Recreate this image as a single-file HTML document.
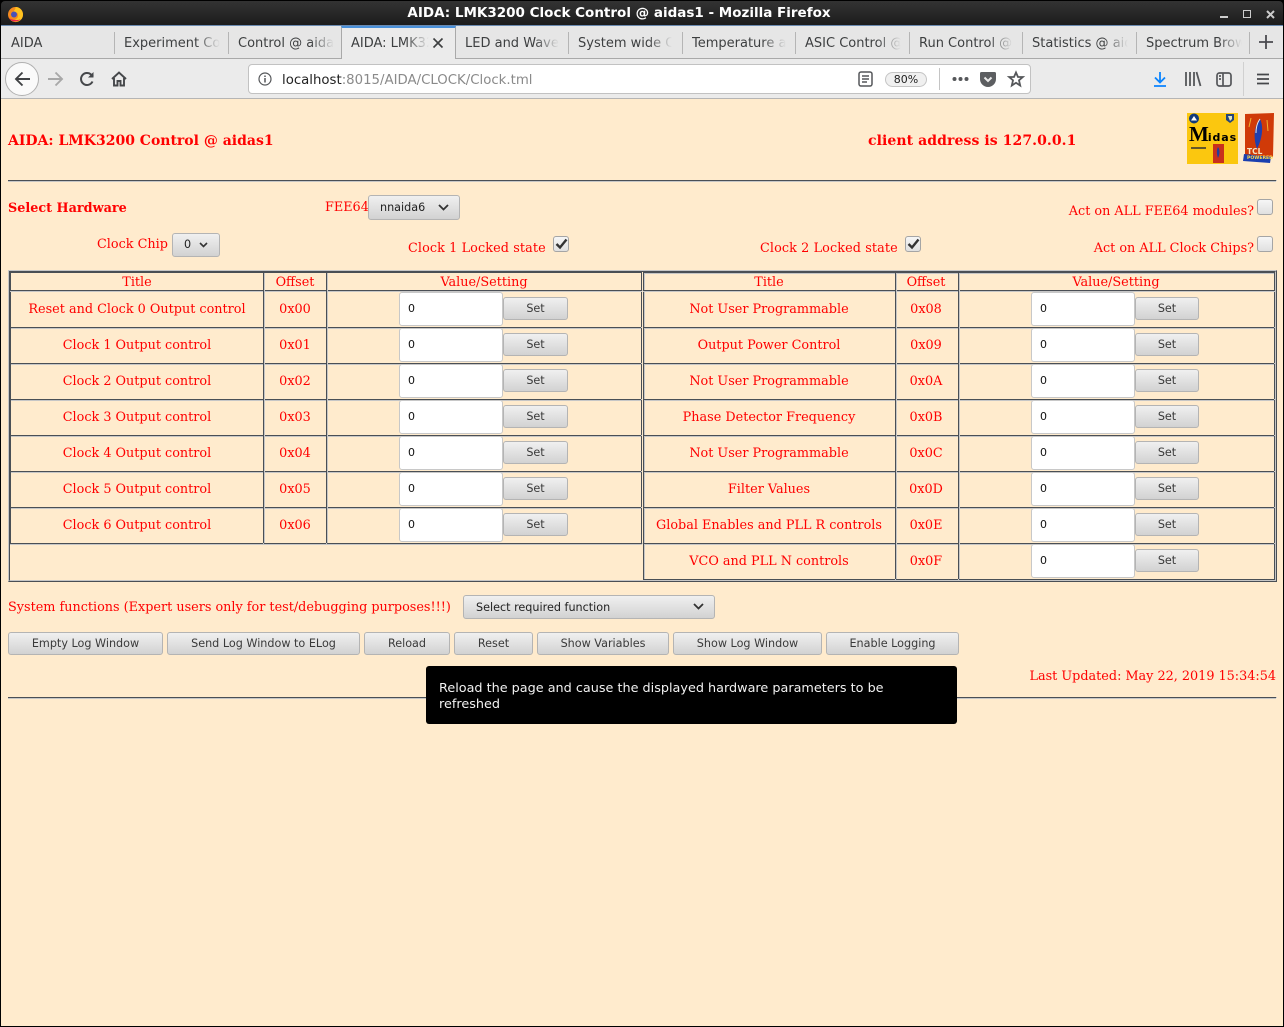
<!DOCTYPE html>
<html><head><meta charset="utf-8"><title>AIDA: LMK3200 Clock Control @ aidas1</title>
<style>
*{box-sizing:border-box}
html,body{margin:0;padding:0;width:1284px;height:1027px;overflow:hidden;background:#000}
body{position:relative;font-family:"DejaVu Sans",sans-serif}
.a{position:absolute;white-space:nowrap}
#titlebar{left:1px;top:1px;width:1236px;height:24px;color:#fff;font-weight:bold;font-size:13.5px;line-height:25px;text-align:center}
#tb{left:1px;top:1px;width:1282px;height:24px;background:linear-gradient(#333,#1c1c1c);border-radius:4px 4px 0 0}
#tabs{left:1px;top:25px;width:1282px;height:34px;background:#e6e6e6;border-top:1px solid #6a8ab0;border-bottom:1px solid #a9a9a9}
#nav{left:1px;top:59px;width:1282px;height:40px;background:#ebebeb;border-bottom:1px solid #b5b5b5}
.tab{position:absolute;top:33px;height:22px;font-size:13px;line-height:22px;color:#3d3f40;overflow:hidden;white-space:nowrap}
.tab i{position:absolute;right:0;top:0;width:24px;height:22px;background:linear-gradient(90deg,rgba(230,230,230,0),#e6e6e6)}
.sep{position:absolute;top:32px;width:1px;height:22px;background:#b5b5b5}
#page{left:1px;top:99px;width:1282px;height:927px;background:#ffebcd}
.s{position:absolute;white-space:nowrap;color:#f00;font-family:"DejaVu Serif",serif;font-size:12.8px;line-height:20px;height:16px}
.b{font-weight:bold}
.c{text-align:center;transform:translateY(1px)}
.l{position:absolute;background:#4a4f55;box-shadow:0 1px 0 #c6c6c6,1px 0 0 #c6c6c6}
.in{position:absolute;width:104px;height:34px;background:#fff;border:1px solid #c8c8c8;border-radius:3px;font-size:11px;line-height:32px;padding-left:8px;color:#111}
.btn{position:absolute;height:23px;background:linear-gradient(#f0f0f0,#d2d2d2);border:1px solid #b4b4b4;border-radius:3px;font-size:11.2px;line-height:21px;text-align:center;color:#3a3a3a;white-space:nowrap}
.cb{position:absolute;width:16px;height:16px;background:linear-gradient(#f6f6f6,#e0e0e0);border:1px solid #a5a5a5;border-radius:3px}
svg{position:absolute;overflow:visible}
</style></head><body>
<div class="a" id="tb"></div>
<div class="a" id="titlebar">AIDA: LMK3200 Clock Control @ aidas1 - Mozilla Firefox</div>
<svg style="left:7px;top:6px" width="17" height="17" viewBox="0 0 17 17"><circle cx="8.5" cy="8.5" r="7.5" fill="#f58a1f"/><path d="M8.5 1A7.5 7.5 0 0 1 16 8.500A7.500 7.500 0 0 1 4 14.500C8 15 12 12 11 8C10 6 8 6 6 6.500C7 4 9 3 8.500 1Z" fill="#ffc21f"/><circle cx="7" cy="8.500" r="3" fill="#4a52b8"/><path d="M2 12C4 16 10 17 14 13C10 15 5 14 2 12Z" fill="#e8214a"/></svg>
<div class="a" style="left:1220px;top:16px;width:8px;height:2px;background:#ccc"></div>
<div class="a" style="left:1243px;top:10px;width:8px;height:8px;border:1.500px solid #ccc"></div>
<svg style="left:1266px;top:10px" width="9" height="9"><path d="M1 1L8 8M8 1L1 8" stroke="#ccc" stroke-width="2"/></svg>

<div class="a" id="tabs"></div>
<div class="a" style="left:341px;top:26px;width:115px;height:33px;background:#ebebeb;border-left:1px solid #a9a9a9;border-right:1px solid #a9a9a9;border-top:2px solid #4a90d9"></div>
<div class="tab" style="left:11px;width:100px">AIDA</div>
<div class="tab" style="left:124px;width:96px">Experiment Control<i></i></div>
<div class="tab" style="left:238px;width:96px">Control @ aidas1<i></i></div>
<div class="tab" style="left:351px;width:78px">AIDA: LMK3200<i style="background:linear-gradient(90deg,rgba(235,235,235,0),#ebebeb)"></i></div>
<svg style="left:432px;top:37px" width="12" height="12"><path d="M1.500 1.500L10.500 10.500M10.500 1.500L1.500 10.500" stroke="#3d3f40" stroke-width="1.600"/></svg>
<div class="tab" style="left:465px;width:94px">LED and Waveform<i></i></div>
<div class="tab" style="left:578px;width:94px">System wide Control<i></i></div>
<div class="tab" style="left:692px;width:94px">Temperature and<i></i></div>
<div class="tab" style="left:805px;width:96px">ASIC Control @ aidas1<i></i></div>
<div class="tab" style="left:919px;width:94px">Run Control @ aidas1<i></i></div>
<div class="tab" style="left:1032px;width:96px">Statistics @ aidas1<i></i></div>
<div class="tab" style="left:1146px;width:96px">Spectrum Browser<i></i></div>
<div class="sep" style="left:114px"></div><div class="sep" style="left:228px"></div><div class="sep" style="left:568px"></div><div class="sep" style="left:682px"></div><div class="sep" style="left:795px"></div><div class="sep" style="left:909px"></div><div class="sep" style="left:1022px"></div><div class="sep" style="left:1136px"></div><div class="sep" style="left:1249px"></div>
<svg style="left:1259px;top:35px" width="14" height="14"><path d="M7 0V14M0 7H14" stroke="#4a4a4f" stroke-width="1.800"/></svg>

<div class="a" id="nav"></div>
<div class="a" style="left:5px;top:62px;width:34px;height:34px;border-radius:50%;background:#fafafa;border:1px solid #b0b0b0"></div>
<svg style="left:14px;top:71px" width="17" height="16" fill="none" stroke="#3f4144" stroke-width="1.900"><path d="M16 8H2M8.500 1.500L2 8L8.500 14.500"/></svg>
<svg style="left:47px;top:71px" width="17" height="16" fill="none" stroke="#a8a8a8" stroke-width="1.900"><path d="M1 8H15M8.500 1.500L15 8L8.500 14.500"/></svg>
<svg style="left:79px;top:71px" width="16" height="16" fill="none" stroke="#45474a" stroke-width="2"><path d="M13.500 10.500A6 6 0 1 1 12 3.500L14 5.500"/><path d="M14.500 1V6.500H9" fill="#45474a" stroke="none"/></svg>
<svg style="left:111px;top:71px" width="16" height="16" fill="none" stroke="#45474a" stroke-width="1.900"><path d="M1 8L8 1.500L15 8M3 7V14.500H6.500V10H9.500V14.500H13V7"/></svg>
<div class="a" style="left:248px;top:64px;width:783px;height:30px;background:#fff;border:1px solid #c2c2c2;border-radius:4px"></div>
<svg style="left:258px;top:72px" width="14" height="14" fill="none" stroke="#55575a" stroke-width="1.200"><circle cx="7" cy="7" r="6"/><path d="M7 6V10.500M7 3.500V5" stroke-width="1.500"/></svg>
<div class="a" style="left:282px;top:72px;font-size:13.300px;line-height:17px;color:#8a8a8a"><span style="color:#222">localhost</span>:8015/AIDA/CLOCK/Clock.tml</div>
<svg style="left:858px;top:71px" width="15" height="16" fill="none" stroke="#55575a" stroke-width="1.500"><rect x="1" y="1" width="13" height="14" rx="2"/><path d="M4 5H11M4 8H11M4 11H9"/></svg>
<div class="a" style="left:885px;top:72px;width:42px;height:15px;border:1px solid #c4c4c4;border-radius:8px;background:#f0f0f0;font-size:11px;line-height:13px;text-align:center;color:#222">80%</div>
<div class="a" style="left:939px;top:68px;width:1px;height:22px;background:#c4c4c4"></div>
<svg style="left:952px;top:76px" width="17" height="6" fill="#55575a"><circle cx="2.500" cy="3" r="2"/><circle cx="8.500" cy="3" r="2"/><circle cx="14.500" cy="3" r="2"/></svg>
<svg style="left:980px;top:72px" width="16" height="15"><path d="M1.500 0H14.500A1.500 1.500 0 0 1 16 1.500V7A8 8 0 0 1 0 7V1.500A1.500 1.500 0 0 1 1.500 0Z" fill="#5c5e61"/><path d="M4.500 5.500L8 9L11.500 5.500" stroke="#ebebeb" stroke-width="2" fill="none"/></svg>
<svg style="left:1008px;top:71px" width="16" height="16" fill="none" stroke="#55575a" stroke-width="1.800"><path d="M8 1.500L10 6H14.800L11 9.300L12.200 14.500L8 11.800L3.800 14.500L5 9.300L1.200 6H6Z"/></svg>
<svg style="left:1153px;top:72px" width="14" height="15" fill="none" stroke="#0a84ff" stroke-width="1.800"><path d="M7 0V10M2 5.500L7 10.500L12 5.500M1 14H13"/></svg>
<svg style="left:1185px;top:72px" width="16" height="15" fill="none" stroke="#55575a" stroke-width="1.800"><path d="M1 0V14M5 0V14M9 0V14M11.500 0L15.500 14"/></svg>
<svg style="left:1216px;top:72px" width="16" height="15" fill="none" stroke="#55575a" stroke-width="1.700"><rect x="1" y="1" width="14" height="13" rx="2.500"/><path d="M7 1V14M3 4H5M3 7H5"/></svg>
<div class="a" style="left:1243px;top:62px;width:1px;height:34px;background:#d0d0d0"></div>
<svg style="left:1257px;top:73px" width="12" height="12" stroke="#45474a" stroke-width="1.700"><path d="M0 1.500H12M0 6H12M0 10.500H12"/></svg>

<div class="a" id="page"></div>

<div class="s b" style="left:8px;top:132px;font-size:14px;line-height:18px">AIDA: LMK3200 Control @ aidas1</div>
<div class="s b" style="left:868px;top:132px;font-size:14px;line-height:18px;letter-spacing:.08px">client address is 127.0.0.1</div>

<div class="a" style="left:1187px;top:113px;width:51px;height:51px;background:#fbc70f"></div>
<div class="a" style="left:1189px;top:122px;font:bold 21px 'Liberation Serif',serif;line-height:24px;color:#000;letter-spacing:-1px">M<span style="font:bold 11px 'DejaVu Sans',sans-serif;letter-spacing:.9px">idas</span></div>
<svg style="left:1187px;top:113px" width="51" height="51"><circle cx="7" cy="5.500" r="5" fill="#123a7a"/><path d="M4 7.500L7 3L10 7.500Z" fill="#fff"/><path d="M39 1H47V7L43 10L39 7Z" fill="#23457c"/><path d="M41 3H45V6L43 8Z" fill="#dfe3c0"/><rect x="26" y="31" width="11" height="19" fill="#c9301c"/><path d="M31 34C29 38 30 42 31 45C33 41 33 37 31 34Z" fill="#1f3fa0"/><rect x="4" y="34" width="15" height="2" fill="#333" opacity=".75"/></svg>
<svg style="left:1243px;top:113px" width="32" height="51"><path d="M2 1L31 0L30 44L2 42Z" fill="#d03a08"/><path d="M1 41L28 44L27 50L0 48Z" fill="#1a3fb0"/><path d="M17 6C11 13 10 25 14 36C19 26 21 14 17 6Z" fill="#1f3fae"/><path d="M17 6C14 10 13 14 13 20" stroke="#e6e6e6" stroke-width="1" fill="none"/><path d="M24 7L25 18" stroke="#f0b030" stroke-width="1"/><path d="M8 5L6 14" stroke="#f0b030" stroke-width="1"/></svg>
<div class="a" style="left:1247px;top:148px;font:bold 7.500px 'DejaVu Sans',sans-serif;color:#f4e6c8;line-height:8px">TCL</div>
<div class="a" style="left:1247px;top:156px;font:bold 4.600px 'DejaVu Sans',sans-serif;color:#ffd84a;line-height:6px">POWERED</div>

<div class="l" style="left:8px;top:180px;width:1268px;height:1px"></div>

<div class="s b" style="left:8px;top:199px">Select Hardware</div>
<div class="s" style="left:325px;top:198px">FEE64</div>
<div class="btn" style="left:368px;top:195px;width:92px;height:25px;line-height:23px;text-align:left;padding-left:11px;color:#222">nnaida6</div>
<svg style="left:438px;top:204px" width="11" height="7" fill="none" stroke="#333" stroke-width="1.800"><path d="M1 1L5.500 5.500L10 1"/></svg>
<div class="s" style="top:202px;text-align:right;width:300px;left:954px">Act on ALL FEE64 modules?</div>
<div class="cb" style="left:1257px;top:199px"></div>
<div class="s" style="left:97px;top:235px">Clock Chip</div>
<div class="btn" style="left:172px;top:233px;width:48px;height:24px;line-height:22px;text-align:left;padding-left:11px;color:#222">0</div>
<svg style="left:199px;top:242px" width="9" height="6" fill="none" stroke="#333" stroke-width="1.600"><path d="M1 1L4.500 4.500L8 1"/></svg>
<div class="s" style="left:408px;top:239px;letter-spacing:.1px">Clock 1 Locked state</div>
<div class="cb" style="left:553px;top:236px"></div>
<svg style="left:555px;top:238px" width="13" height="12" fill="none" stroke="#333" stroke-width="2.400"><path d="M1.500 6L5 9.500L11.500 1.500"/></svg>
<div class="s" style="left:760px;top:239px;letter-spacing:.1px">Clock 2 Locked state</div>
<div class="cb" style="left:905px;top:236px"></div>
<svg style="left:907px;top:238px" width="13" height="12" fill="none" stroke="#333" stroke-width="2.400"><path d="M1.500 6L5 9.500L11.500 1.500"/></svg>
<div class="s" style="top:239px;text-align:right;width:300px;left:954px">Act on ALL Clock Chips?</div>
<div class="cb" style="left:1257px;top:236px"></div>

<!-- table frames -->
<div class="a" style="left:8px;top:270px;width:1269px;height:312px;border:1px solid #c6c6c6;border-right-color:#4a4f55;border-bottom-color:#4a4f55"></div>
<div class="a" style="left:9px;top:271px;width:1267px;height:310px;border:1px solid #4a4f55;border-right-color:#c6c6c6;border-bottom-color:#c6c6c6"></div>
<div class="a" style="left:10px;top:272px;width:632px;height:272px;border:1px solid #4a4f55;border-bottom:0"></div>
<div class="a" style="left:643px;top:272px;width:632px;height:308px;border:1px solid #4a4f55"></div>
<div class="a" style="left:644px;top:273px;width:630px;height:306px;border:1px solid #c6c6c6;border-right:0;border-bottom:0"></div>
<div class="l" style="left:10px;top:290px;width:632px;height:1px"></div>
<div class="l" style="left:643px;top:290px;width:632px;height:1px"></div>
<div class="l" style="left:11px;top:327px;width:630px;height:1px"></div><div class="l" style="left:644px;top:327px;width:630px;height:1px"></div>
<div class="l" style="left:11px;top:363px;width:630px;height:1px"></div><div class="l" style="left:644px;top:363px;width:630px;height:1px"></div>
<div class="l" style="left:11px;top:399px;width:630px;height:1px"></div><div class="l" style="left:644px;top:399px;width:630px;height:1px"></div>
<div class="l" style="left:11px;top:435px;width:630px;height:1px"></div><div class="l" style="left:644px;top:435px;width:630px;height:1px"></div>
<div class="l" style="left:11px;top:471px;width:630px;height:1px"></div><div class="l" style="left:644px;top:471px;width:630px;height:1px"></div>
<div class="l" style="left:11px;top:507px;width:630px;height:1px"></div><div class="l" style="left:644px;top:507px;width:630px;height:1px"></div>
<div class="l" style="left:10px;top:543px;width:632px;height:1px"></div><div class="l" style="left:644px;top:543px;width:630px;height:1px"></div>
<div class="l" style="left:263px;top:273px;width:1px;height:270px"></div>
<div class="l" style="left:326px;top:273px;width:1px;height:270px"></div>
<div class="l" style="left:895px;top:273px;width:1px;height:306px"></div>
<div class="l" style="left:958px;top:273px;width:1px;height:306px"></div>

<div class="s c" style="left:11px;width:252px;top:272px">Title</div>
<div class="s c" style="left:264px;width:62px;top:272px">Offset</div>
<div class="s c" style="left:327px;width:314px;top:272px">Value/Setting</div>
<div class="s c" style="left:643px;width:252px;top:272px">Title</div>
<div class="s c" style="left:895px;width:62px;top:272px">Offset</div>
<div class="s c" style="left:959px;width:314px;top:272px">Value/Setting</div>

<div class="s c" style="left:11px;width:252px;top:299px">Reset and Clock 0 Output control</div><div class="s c" style="left:264px;width:62px;top:299px">0x00</div><div class="in" style="left:399px;top:292px">0</div><div class="btn" style="left:503px;top:297px;width:65px">Set</div>
<div class="s c" style="left:11px;width:252px;top:335px">Clock 1 Output control</div><div class="s c" style="left:264px;width:62px;top:335px">0x01</div><div class="in" style="left:399px;top:328px">0</div><div class="btn" style="left:503px;top:333px;width:65px">Set</div>
<div class="s c" style="left:11px;width:252px;top:371px">Clock 2 Output control</div><div class="s c" style="left:264px;width:62px;top:371px">0x02</div><div class="in" style="left:399px;top:364px">0</div><div class="btn" style="left:503px;top:369px;width:65px">Set</div>
<div class="s c" style="left:11px;width:252px;top:407px">Clock 3 Output control</div><div class="s c" style="left:264px;width:62px;top:407px">0x03</div><div class="in" style="left:399px;top:400px">0</div><div class="btn" style="left:503px;top:405px;width:65px">Set</div>
<div class="s c" style="left:11px;width:252px;top:443px">Clock 4 Output control</div><div class="s c" style="left:264px;width:62px;top:443px">0x04</div><div class="in" style="left:399px;top:436px">0</div><div class="btn" style="left:503px;top:441px;width:65px">Set</div>
<div class="s c" style="left:11px;width:252px;top:479px">Clock 5 Output control</div><div class="s c" style="left:264px;width:62px;top:479px">0x05</div><div class="in" style="left:399px;top:472px">0</div><div class="btn" style="left:503px;top:477px;width:65px">Set</div>
<div class="s c" style="left:11px;width:252px;top:515px">Clock 6 Output control</div><div class="s c" style="left:264px;width:62px;top:515px">0x06</div><div class="in" style="left:399px;top:508px">0</div><div class="btn" style="left:503px;top:513px;width:65px">Set</div>

<div class="s c" style="left:643px;width:252px;top:299px">Not User Programmable</div><div class="s c" style="left:895px;width:62px;top:299px">0x08</div><div class="in" style="left:1031px;top:292px">0</div><div class="btn" style="left:1135px;top:297px;width:64px">Set</div>
<div class="s c" style="left:643px;width:252px;top:335px">Output Power Control</div><div class="s c" style="left:895px;width:62px;top:335px">0x09</div><div class="in" style="left:1031px;top:328px">0</div><div class="btn" style="left:1135px;top:333px;width:64px">Set</div>
<div class="s c" style="left:643px;width:252px;top:371px">Not User Programmable</div><div class="s c" style="left:895px;width:62px;top:371px">0x0A</div><div class="in" style="left:1031px;top:364px">0</div><div class="btn" style="left:1135px;top:369px;width:64px">Set</div>
<div class="s c" style="left:643px;width:252px;top:407px">Phase Detector Frequency</div><div class="s c" style="left:895px;width:62px;top:407px">0x0B</div><div class="in" style="left:1031px;top:400px">0</div><div class="btn" style="left:1135px;top:405px;width:64px">Set</div>
<div class="s c" style="left:643px;width:252px;top:443px">Not User Programmable</div><div class="s c" style="left:895px;width:62px;top:443px">0x0C</div><div class="in" style="left:1031px;top:436px">0</div><div class="btn" style="left:1135px;top:441px;width:64px">Set</div>
<div class="s c" style="left:643px;width:252px;top:479px">Filter Values</div><div class="s c" style="left:895px;width:62px;top:479px">0x0D</div><div class="in" style="left:1031px;top:472px">0</div><div class="btn" style="left:1135px;top:477px;width:64px">Set</div>
<div class="s c" style="left:643px;width:252px;top:515px">Global Enables and PLL R controls</div><div class="s c" style="left:895px;width:62px;top:515px">0x0E</div><div class="in" style="left:1031px;top:508px">0</div><div class="btn" style="left:1135px;top:513px;width:64px">Set</div>
<div class="s c" style="left:643px;width:252px;top:551px">VCO and PLL N controls</div><div class="s c" style="left:895px;width:62px;top:551px">0x0F</div><div class="in" style="left:1031px;top:544px">0</div><div class="btn" style="left:1135px;top:549px;width:64px">Set</div>

<div class="s" style="left:8px;top:598px">System functions (Expert users only for test/debugging purposes!!!)</div>
<div class="btn" style="left:463px;top:595px;width:252px;height:24px;line-height:23px;text-align:left;padding-left:12px;color:#222">Select required function</div>
<svg style="left:693px;top:603px" width="11" height="7" fill="none" stroke="#333" stroke-width="1.800"><path d="M1 1L5.500 5.500L10 1"/></svg>

<div class="btn" style="left:8px;top:632px;width:155px">Empty Log Window</div>
<div class="btn" style="left:167px;top:632px;width:193px">Send Log Window to ELog</div>
<div class="btn" style="left:364px;top:632px;width:86px">Reload</div>
<div class="btn" style="left:454px;top:632px;width:79px">Reset</div>
<div class="btn" style="left:537px;top:632px;width:132px">Show Variables</div>
<div class="btn" style="left:673px;top:632px;width:149px">Show Log Window</div>
<div class="btn" style="left:826px;top:632px;width:133px">Enable Logging</div>

<div class="s" style="top:667px;left:976px;width:300px;text-align:right">Last Updated: May 22, 2019 15:34:54</div>
<div class="l" style="left:8px;top:697px;width:1268px;height:1px"></div>
<div class="a" style="left:426px;top:666px;width:531px;height:58px;background:#000;border-radius:3px;color:#f2f2f2;font-size:12.8px;line-height:16px;padding:15px 13px 0;white-space:nowrap">Reload the page and cause the displayed hardware parameters to be<br>refreshed</div>
</body></html>
